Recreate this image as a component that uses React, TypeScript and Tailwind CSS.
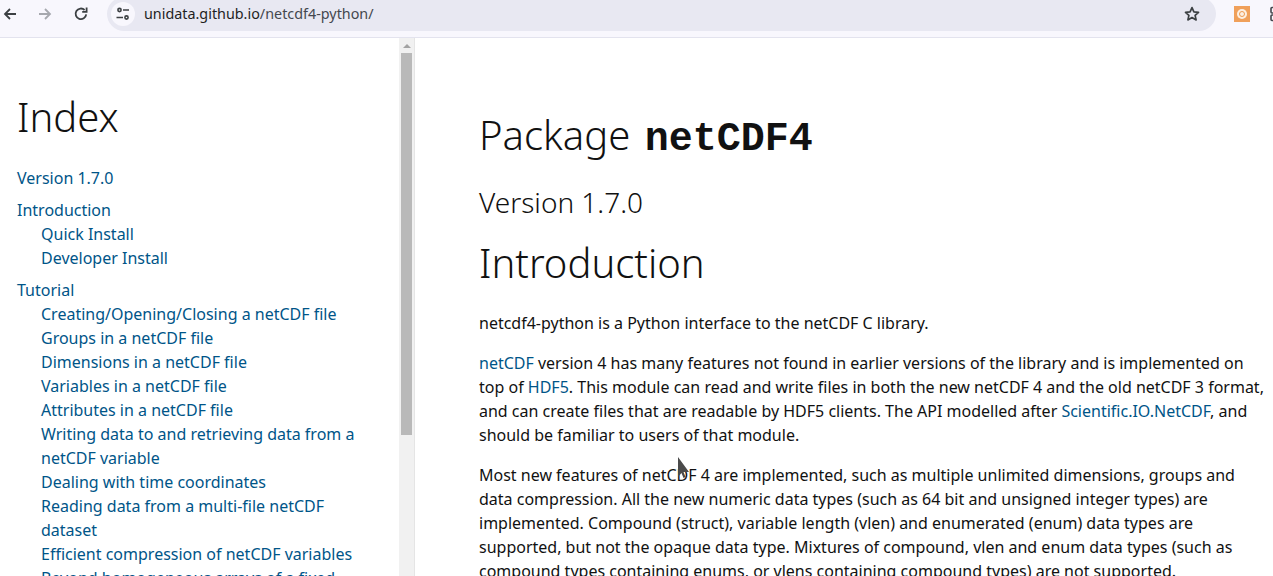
const linkClass = "text-[#005588]";

function Back() {
  return (
    <svg width="16" height="16" viewBox="0 0 16 16" fill="none" stroke="#3c4043" strokeWidth="1.8">
      <path d="M14 8H3M8 3L3 8l5 5" />
    </svg>
  );
}

function Forward() {
  return (
    <svg width="16" height="16" viewBox="0 0 16 16" fill="none" stroke="#a6a8ae" strokeWidth="1.8">
      <path d="M2 8h11M8 3l5 5-5 5" />
    </svg>
  );
}

function Reload() {
  return (
    <svg width="16" height="16" viewBox="0 0 16 16" fill="none" stroke="#3c4043" strokeWidth="1.8">
      <path d="M13.2 8.4A5.3 5.3 0 1 1 11.6 4" />
      <path d="M13.6 1.4v4.4H9.2" />
    </svg>
  );
}

function Tune() {
  return (
    <svg width="16" height="16" viewBox="0 0 16 16" fill="none" stroke="#3c4043" strokeWidth="1.6">
      <circle cx="4.5" cy="4" r="1.6" />
      <path d="M8 4h6M1.5 11.5H8" />
      <circle cx="11.5" cy="11.5" r="1.6" />
    </svg>
  );
}

function Star() {
  return (
    <svg width="16" height="16" viewBox="0 0 16 16" fill="none" stroke="#3c4043" strokeWidth="1.7" strokeLinejoin="round">
      <path d="M8 1.6l1.9 4.2 4.6.5-3.4 3.1 1 4.5L8 11.6l-4.1 2.3 1-4.5L1.5 6.3l4.6-.5z" />
    </svg>
  );
}

function Extension() {
  return (
    <div className="flex h-4 w-4 items-center justify-center bg-[#f0a05a]">
      <div className="flex h-2.5 w-2.5 items-center justify-center rounded-full bg-[#fdf0e2]">
        <div className="h-1.5 w-1.5 rounded-full border border-[#ee9a50]" />
      </div>
    </div>
  );
}

// only the left edge of this one shows in the window
function Puzzle() {
  return (
    <svg width="16" height="16" viewBox="0 0 16 16" fill="none" stroke="#44474e" strokeWidth="1.6">
      <rect x="1" y="1.5" width="5.5" height="5.5" rx="1" />
      <rect x="1" y="9" width="5.5" height="5.5" rx="1" />
    </svg>
  );
}

function TopBar() {
  return (
    <div className="flex h-[38px] shrink-0 items-start overflow-hidden border-b border-[#e3e3ee] bg-[#f8f7fd]">
      <div className="flex h-[28px] items-center">
        <div className="ml-[2px] flex w-[16px]"><Back /></div>
        <div className="ml-[19px] flex w-[16px]"><Forward /></div>
        <div className="ml-[20px] flex w-[16px]"><Reload /></div>
      </div>
      <div className="-mt-[3px] ml-[18px] flex h-[34px] w-[1109px] shrink-0 items-center rounded-full bg-[#e8e8f2]">
        <div className="ml-[4px] flex h-[24px] w-[24px] items-center justify-center rounded-full bg-[#f8f7fd]">
          <Tune />
        </div>
        <div className="ml-[9px] text-[14.35px] leading-none text-[#44474e]">
          <span className="text-[#1f1f1f]">unidata.github.io</span>/netcdf4-python/
        </div>
        <div className="ml-auto mr-[16px] flex"><Star /></div>
      </div>
      <div className="ml-[18px] mt-[6px] shrink-0"><Extension /></div>
      <div className="ml-[20px] mt-[6px] shrink-0"><Puzzle /></div>
    </div>
  );
}

const toc = [
  { title: "Version 1.7.0", items: [] },
  { title: "Introduction", items: ["Quick Install", "Developer Install"] },
  {
    title: "Tutorial",
    items: [
      "Creating/Opening/Closing a netCDF file",
      "Groups in a netCDF file",
      "Dimensions in a netCDF file",
      "Variables in a netCDF file",
      "Attributes in a netCDF file",
      "Writing data to and retrieving data from a netCDF variable",
      "Dealing with time coordinates",
      "Reading data from a multi-file netCDF dataset",
      "Efficient compression of netCDF variables",
      "Beyond homogeneous arrays of a fixed type",
    ],
  },
];

function Sidebar() {
  return (
    <div className="h-full w-[399px] shrink-0 overflow-hidden pl-[17px] pr-[40px]">
      <h1 className="mt-[51px] text-[40px] font-light leading-[56px] text-[#111]">Index</h1>
      <div className="mt-[21px] flex flex-col gap-2">
        {toc.map((group) => (
          <div key={group.title}>
            <div className={`text-base leading-6 ${linkClass}`}>{group.title}</div>
            {group.items.map((item) => (
              <div key={item} className={`pl-6 text-base leading-6 ${linkClass}`}>{item}</div>
            ))}
          </div>
        ))}
      </div>
    </div>
  );
}

function Scrollbar() {
  return (
    <div className="flex h-full w-[16px] shrink-0 flex-col items-center border-r border-[#e5e5e5] bg-[#f1f1f1]">
      <div className="mt-[6px] h-0 w-0 border-x-[4px] border-b-[4px] border-x-transparent border-b-[#a3a3a3]" />
      <div className="mt-[5px] h-[382px] w-[11px] shrink-0 bg-[#b9b9b9]" />
    </div>
  );
}

function Content() {
  return (
    <div className="min-w-0 flex-1 overflow-hidden pl-[64px] pr-[8px] text-base leading-6 text-[#111]">
      <h1 className="mt-[67px] text-[40px] font-light leading-[60px]">
        Package <span className="ml-[4px] font-['Liberation_Mono',monospace] text-[40px] font-bold">netCDF4</span>
      </h1>
      <h2 className="mt-[5px] text-[28px] font-light leading-[54px]">Version 1.7.0</h2>
      <h1 className="mt-[6px] text-[40px] font-light leading-[56px]">Introduction</h1>
      <p className="mt-[20px]">netcdf4-python is a Python interface to the netCDF C library.</p>
      <p className="mt-4">
        <span className={linkClass}>netCDF</span> version 4 has many features not found in earlier versions of the library and is implemented on top of <span className={linkClass}>HDF5</span>. This module can read and write files in both the new netCDF 4 and the old netCDF 3 format, and can create files that are readable by HDF5 clients. The API modelled after <span className={linkClass}>Scientific.IO.NetCDF</span>, and should be familiar to users of that module.
      </p>
      <p className="mt-4">
        Most new features of netCDF 4 are implemented, such as multiple unlimited dimensions, groups and data compression. All the new numeric data types (such as 64 bit and unsigned integer types) are implemented. Compound (struct), variable length (vlen) and enumerated (enum) data types are supported, but not the opaque data type. Mixtures of compound, vlen and enum data types (such as compound types containing enums, or vlens containing compound types) are not supported.
      </p>
    </div>
  );
}

export default function App() {
  return (
    <div className="relative flex h-[576px] w-[1273px] flex-col overflow-hidden bg-white font-['Noto_Sans',sans-serif]">
      <TopBar />
      <div className="flex min-h-0 flex-1">
        <Sidebar />
        <Scrollbar />
        <Content />
      </div>
      {/* mouse pointer */}
      <svg className="absolute left-[677px] top-[457px]" width="14" height="24" viewBox="0 0 14 24">
        <path d="M1 0v20l3.5-4 2 5 2-1-2-5h5.5z" fill="#4a4a4a" />
      </svg>
    </div>
  );
}
